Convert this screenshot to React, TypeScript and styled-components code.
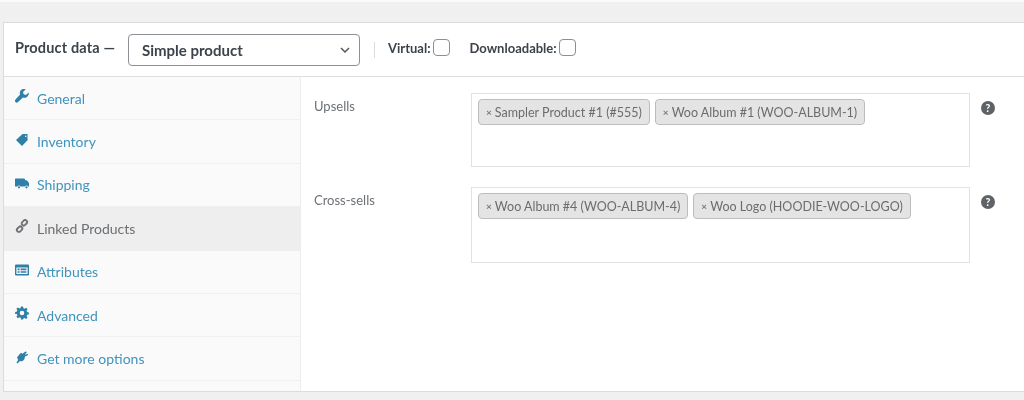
import React from "react";
import styled, { createGlobalStyle } from "styled-components";

const Global = createGlobalStyle`
  html, body { margin: 0; padding: 0; background: #fff; }
  body { font-family: "Lato", "Noto Sans", sans-serif; }
  * { box-sizing: border-box; }
`;

const Page = styled.div`
  width: 1024px;
  height: 400px;
  overflow: hidden;
  background: #f0f0f1;
  padding: 20px 0 0 3px;
  border-top: 2px solid #fafafa;
  filter: blur(0.35px);
`;

const Panel = styled.div`
  height: 370px;
  background: #fff;
  border: 1px solid #dcdcde;
  border-right: 0;
  display: flex;
  flex-direction: column;
`;

const Header = styled.div`
  height: 54px;
  flex: none;
  display: flex;
  align-items: center;
  padding-left: 11px;
  border-bottom: 1px solid #dfdfe2;
  color: #3c434a;
`;

const Title = styled.span`
  font-size: 14.5px;
  font-weight: 700;
  letter-spacing: 0.15px;
  width: 113px;
  flex: none;
  white-space: nowrap;
  position: relative;
  top: -2px;
`;

const Select = styled.div`
  width: 232px;
  height: 32px;
  flex: none;
  border: 1px solid #8c8f94;
  border-radius: 4px;
  display: flex;
  align-items: center;
  justify-content: space-between;
  padding: 0 8px 0 13px;
  font-size: 15px;
  font-weight: 700;
  color: #3c434a;
`;

const Divider = styled.span`
  width: 1px;
  height: 16px;
  background: #dcdcde;
  margin: 0 13px 0 14px;
  flex: none;
`;

const CheckLabel = styled.label<{ $gap: number }>`
  display: flex;
  align-items: center;
  gap: 2px;
  font-size: 13px;
  font-weight: 700;
  margin-right: ${(p) => p.$gap}px;
  position: relative;
  top: -2px;
  white-space: nowrap;
`;

const Box = styled.span`
  width: 17px;
  height: 17px;
  border: 1px solid #8c8f94;
  border-radius: 4px;
  background: #fff;
  flex: none;
`;

const Body = styled.div`
  flex: 1;
  display: flex;
  min-height: 0;
`;

const Sidebar = styled.nav`
  width: 297px;
  flex: none;
  background: #fafafa;
  border-right: 1px solid #eee;
`;

const Tab = styled.a<{ $active?: boolean }>`
  height: 43.4px;
  display: flex;
  align-items: center;
  gap: 8px;
  padding: 0 0 0 11px;
  font-size: 14px;
  color: ${(p) => (p.$active ? "#6b6f73" : "#3f93bd")};
  background: ${(p) => (p.$active ? "#eeeeee" : "transparent")};
  border-bottom: 1px solid ${(p) => (p.$active ? "#eeeeee" : "#f0f0f0")};
`;

const TabIcon = styled.svg<{ $active?: boolean }>`
  width: 14px;
  height: 14px;
  flex: none;
  position: relative;
  top: -2px;
  fill: ${(p) => (p.$active ? "#6f7276" : "#2f7fa8")};
`;

const Content = styled.div`
  flex: 1;
  padding: 16px 0 0 13px;
`;

const Field = styled.div<{ $h: number }>`
  display: flex;
  align-items: flex-start;
  margin-bottom: 20px;
  min-height: ${(p) => p.$h}px;
`;

const FieldLabel = styled.div`
  width: 157px;
  flex: none;
  font-size: 13px;
  line-height: 16px;
  color: #6d7175;
  padding-top: 4.5px;
`;

const Tags = styled.div<{ $h: number }>`
  width: 499px;
  height: ${(p) => p.$h}px;
  flex: none;
  border: 1px solid #e2e2e2;
  background: #fff;
  padding: 5px 6px;
  display: flex;
  align-items: flex-start;
  gap: 5px;
`;

const Tag = styled.span`
  height: 25.5px;
  display: inline-flex;
  align-items: center;
  gap: 3px;
  padding: 1px 7px 0;
  border: 1px solid #bdbdbd;
  border-radius: 4px;
  background: #e4e4e4;
  color: #6a6d70;
  font-size: 12.5px;
  white-space: nowrap;
`;

const Remove = styled.span`
  font-size: 10px;
  color: #7a7a7a;
  font-weight: 700;
`;

const Help = styled.span`
  width: 14px;
  height: 14px;
  margin: 7.5px 0 0 11px;
  border-radius: 50%;
  background: #5f6368;
  color: #fff;
  font-size: 10.5px;
  font-weight: 700;
  line-height: 14px;
  text-align: center;
  flex: none;
`;

const icons: Record<string, React.ReactNode> = {
  wrench: <path d="M13.6 3.4 11 6 8.7 5.3 8 3 10.6.4C8.7-.3 6.6.2 5.6 1.6 4.6 3 4.6 4.4 5.1 5.6L.5 10.6c-.7.7-.7 1.8 0 2.5.7.7 1.8.7 2.5 0l5-4.6c1.2.5 2.7.4 3.9-.6 1.4-1.1 2.3-2.8 1.7-4.5z" />,
  tag: <path fillRule="evenodd" d="M7.5 1H12.5V6.5L13 6.8 7 13 1 7zM10.8 2.4a.8.8 0 1 0 0 1.6.8.8 0 0 0 0-1.6z" />,
  truck: <path d="M.5 2.5h8.5a1 1 0 0 1 1 1v.8h1.8L14 7v3.5h-1a1.6 1.6 0 0 0-3 0H5.5a1.6 1.6 0 0 0-3 0H0V3a.5.5 0 0 1 .5-.5zM4 10.2a1.1 1.1 0 1 1 0 2.2 1.1 1.1 0 0 1 0-2.2zM11.5 10.2a1.1 1.1 0 1 1 0 2.2 1.1 1.1 0 0 1 0-2.2z" />,
  link: (
    <g fill="none" stroke="currentColor" strokeWidth="1.9">
      <rect x="6.4" y="1.8" width="6" height="4" rx="2" transform="rotate(-45 9.4 3.8)" />
      <rect x="1.6" y="8.2" width="6" height="4" rx="2" transform="rotate(-45 4.6 10.2)" />
    </g>
  ),
  table: <path fillRule="evenodd" d="M1 1.5h12a1 1 0 0 1 1 1v9a1 1 0 0 1-1 1H1a1 1 0 0 1-1-1v-9a1 1 0 0 1 1-1zM1.4 4.6v6.5h11.2V4.6zM2.6 5.6h2v1.6h-2zM5.6 5.6h5.8v1.6H5.6zM2.6 8.2h2v1.6h-2zM5.6 8.2h5.8v1.6H5.6z" />,
  gear: <path fillRule="evenodd" d="M6 .5h2l.4 1.8 1.2.5 1.6-1 1.4 1.4-1 1.6.5 1.2 1.8.4v2l-1.8.4-.5 1.2 1 1.6-1.4 1.4-1.6-1-1.2.5L8 13.5H6l-.4-1.8-1.2-.5-1.6 1-1.4-1.4 1-1.6-.5-1.2L.1 8V6l1.8-.4.5-1.2-1-1.6 1.4-1.4 1.6 1 1.2-.5zM7 4.7a2.3 2.3 0 1 0 0 4.6 2.3 2.3 0 0 0 0-4.6z" />,
  plug: <path d="M10.5 1.5 11.8 2 9.9 5l2.6-1.2.6 1.3-3.3 1.6c.2 1.8-.7 3.4-2.3 4.2-.9.4-1.8.4-2.6.1L2.6 13.5l-1.1-.8 1.7-3c-.6-.7-1-1.5-1.1-2.4L5.9 2.7l1.5 1z" />,
};

const tabs = [
  { label: "General", icon: "wrench" },
  { label: "Inventory", icon: "tag" },
  { label: "Shipping", icon: "truck" },
  { label: "Linked Products", icon: "link", active: true },
  { label: "Attributes", icon: "table" },
  { label: "Advanced", icon: "gear" },
  { label: "Get more options", icon: "plug" },
];

const fields = [
  { label: "Upsells", h: 74, tags: ["Sampler Product #1 (#555)", "Woo Album #1 (WOO-ALBUM-1)"] },
  { label: "Cross-sells", h: 76, tags: ["Woo Album #4 (WOO-ALBUM-4)", "Woo Logo (HOODIE-WOO-LOGO)"] },
];

export default function App() {
  return (
    <Page>
      <Global />
      <Panel>
        <Header>
          <Title>Product data —</Title>
          <Select>
            Simple product
            <svg width="12" height="12" viewBox="0 0 12 12" fill="none" stroke="#50575e" strokeWidth="1.5">
              <path d="M2 4l4 4 4-4" />
            </svg>
          </Select>
          <Divider />
          <CheckLabel $gap={20}>Virtual:<Box /></CheckLabel>
          <CheckLabel $gap={0}>Downloadable:<Box /></CheckLabel>
        </Header>
        <Body>
          <Sidebar>
            {tabs.map((t) => (
              <Tab key={t.label} $active={t.active}>
                <TabIcon viewBox="0 0 14 14" $active={t.active} color="#6f7276">{icons[t.icon]}</TabIcon>
                {t.label}
              </Tab>
            ))}
          </Sidebar>
          <Content>
            {fields.map((f) => (
              <Field key={f.label} $h={f.h}>
                <FieldLabel>{f.label}</FieldLabel>
                <Tags $h={f.h}>
                  {f.tags.map((t) => (
                    <Tag key={t}><Remove>×</Remove>{t}</Tag>
                  ))}
                </Tags>
                <Help>?</Help>
              </Field>
            ))}
          </Content>
        </Body>
      </Panel>
    </Page>
  );
}
